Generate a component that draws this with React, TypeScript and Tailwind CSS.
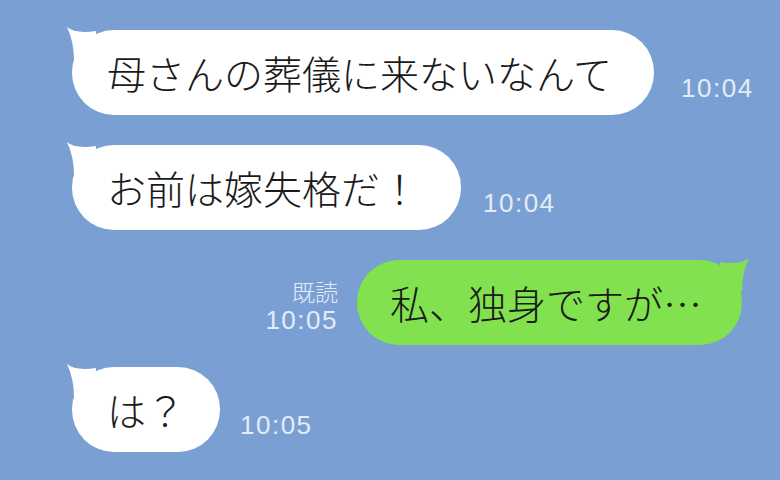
import React from 'react';

const JP = '"Noto Sans CJK JP", "Noto Sans", sans-serif';
const NUM = '"Liberation Sans", Arial, sans-serif';

function TailLeft() {
  return (
    <svg className="absolute left-[-8px] top-[-4px]" width="40" height="36" viewBox="0 0 40 36">
      <path d="M3 1 Q11 8 32 5 L32 34 L10 34 Q10 16 3 1 Z" fill="#ffffff" />
    </svg>
  );
}

function TailRight() {
  return (
    <svg className="absolute right-[-10px] top-[-3px]" width="40" height="36" viewBox="0 0 40 36">
      <path d="M37 1 Q29 8 8 5 L8 34 L30 34 Q30 16 37 1 Z" fill="#82e14f" />
    </svg>
  );
}

function Incoming({ text, time, gap, pad, className }: { text: string; time: string; gap: string; pad: string; className?: string }) {
  return (
    <div className={`flex items-end ${className ?? ''}`}>
      <div className="relative">
        <TailLeft />
        <div
          className={`relative h-[85px] rounded-[42px] bg-white pl-[35px] ${pad} flex items-center text-[39px] font-light text-[#1a1a1a] leading-none whitespace-nowrap`}
          style={{ fontFamily: JP }}
        >
          {text}
        </div>
      </div>
      <div
        className={`${gap} mb-[14px] text-[26px] tracking-[1.5px] text-[#e3ecf8] leading-none`}
        style={{ fontFamily: NUM }}
      >
        {time}
      </div>
    </div>
  );
}

export default function App() {
  return (
    <div className="w-[780px] h-[480px] bg-[#7a9fd3] overflow-hidden flex flex-col pl-[72px] pr-[38px] pt-[30px]">
      <Incoming text="母さんの葬儀に来ないなんて" time="10:04" gap="ml-[27px]" pad="pr-[42px]" />
      <Incoming text="お前は嫁失格だ！" time="10:04" gap="ml-[22px]" pad="pr-[42px]" className="mt-[30px]" />

      <div className="mt-[30px] flex items-end justify-end">
        <div className="mr-[19px] mb-[12px] flex flex-col items-end text-[#e3ecf8] leading-none">
          <span className="text-[23px] font-light" style={{ fontFamily: JP }}>既読</span>
          <span className="mt-[4px] text-[26px] tracking-[1.5px]" style={{ fontFamily: NUM }}>10:05</span>
        </div>
        <div className="relative">
          <TailRight />
          <div
            className="relative h-[85px] rounded-[42px] bg-[#82e14f] pl-[33px] pr-[40px] flex items-center text-[39px] font-light text-[#1a1a1a] leading-none whitespace-nowrap"
            style={{ fontFamily: JP }}
          >
            私、独身ですが…
          </div>
        </div>
      </div>

      <Incoming text="は？" time="10:05" gap="ml-[20px]" pad="pr-[35px]" className="mt-[22px]" />
    </div>
  );
}
